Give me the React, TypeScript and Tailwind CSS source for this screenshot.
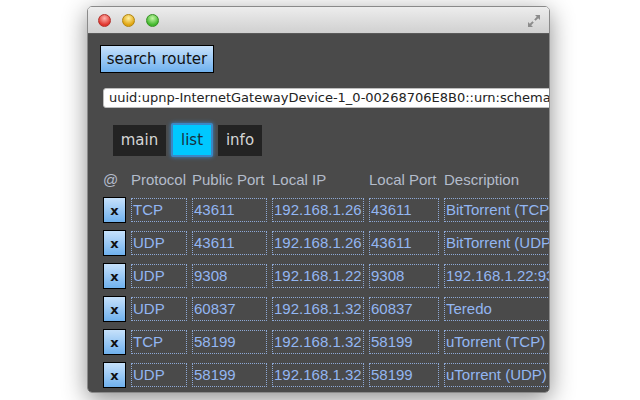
import React from 'react';

type Mapping = {
  protocol: string;
  publicPort: string;
  localIp: string;
  localPort: string;
  description: string;
};

const MAPPINGS: Mapping[] = [
  { protocol: 'TCP', publicPort: '43611', localIp: '192.168.1.26', localPort: '43611', description: 'BitTorrent (TCP)' },
  { protocol: 'UDP', publicPort: '43611', localIp: '192.168.1.26', localPort: '43611', description: 'BitTorrent (UDP)' },
  { protocol: 'UDP', publicPort: '9308', localIp: '192.168.1.22', localPort: '9308', description: '192.168.1.22:9308' },
  { protocol: 'UDP', publicPort: '60837', localIp: '192.168.1.32', localPort: '60837', description: 'Teredo' },
  { protocol: 'TCP', publicPort: '58199', localIp: '192.168.1.32', localPort: '58199', description: 'uTorrent (TCP)' },
  { protocol: 'UDP', publicPort: '58199', localIp: '192.168.1.32', localPort: '58199', description: 'uTorrent (UDP)' },
];

const lucida = "font-['DejaVu_Sans',sans-serif]";
const helv = "font-['Liberation_Sans',Arial,sans-serif]";

const Cell = ({ children }: { children: React.ReactNode }) => (
  <div className="h-[24px] border border-dotted border-[#8ea9d6] px-[1px] text-[15px] leading-[22px] text-[#93b6f2] whitespace-nowrap overflow-hidden">
    {children}
  </div>
);

const TrafficLight = ({ from, to, edge }: { from: string; to: string; edge: string }) => (
  <div
    className="w-[13px] h-[13px] rounded-full border"
    style={{ background: `radial-gradient(circle at 50% 30%, ${from}, ${to} 70%)`, borderColor: edge }}
  />
);

export default function App() {
  return (
    <div className="w-[640px] h-[400px] bg-white overflow-hidden pl-[87px] pt-[6px]">
      <div className="w-[463px] h-[387px] rounded-[5px] overflow-hidden flex flex-col shadow-[0_6px_24px_rgba(0,0,0,0.45)] border border-[#8a8a8a]">
        {/* title bar */}
        <div className="h-[27px] shrink-0 flex items-center pl-[10px] pr-[9px] bg-gradient-to-b from-[#ededed] to-[#d0d0d0] border-b border-[#5a5a5a]">
          <div className="flex gap-[11px] mt-[1px]">
            <TrafficLight from="#ffb3ad" to="#e0342c" edge="#b2302a" />
            <TrafficLight from="#fff1a0" to="#e0a410" edge="#b1850e" />
            <TrafficLight from="#c4f7a6" to="#41b72d" edge="#368f24" />
          </div>
          <div className="flex-1" />
          <svg width="16" height="16" viewBox="0 0 16 16" className="mt-[1px] mr-[-2px]">
            <path d="M9 2h5v5l-1.8-1.8-2.6 2.6-1.4-1.4 2.6-2.6z" fill="#8c8c8c" />
            <path d="M7 14H2V9l1.8 1.8 2.6-2.6 1.4 1.4-2.6 2.6z" fill="#8c8c8c" />
          </svg>
        </div>

        {/* body */}
        <div className="flex-1 bg-[#4a4a4a] pl-[12px] pt-[11px] overflow-hidden">
          <button
            className={`${lucida} w-[114px] h-[28px] border border-black bg-gradient-to-b from-[#c6e1fb] to-[#6fb1ee] text-[15px] text-[#111] leading-none`}
          >
            search router
          </button>

          <div
            className={`${lucida} ml-[3px] mt-[15px] w-[470px] h-[20px] rounded-[3px] bg-white border border-[#bdbdbd] pl-[5px] text-[13px] leading-[18px] text-[#222] whitespace-nowrap overflow-hidden`}
          >
            uuid:upnp-InternetGatewayDevice-1_0-00268706E8B0::urn:schemas-upnp-org:device
          </div>

          <div className={`${lucida} flex items-center gap-[5px] ml-[13px] mt-[15px]`}>
            <div className="w-[53px] h-[31px] bg-[#232323] text-[#d6d6d6] text-[15px] flex items-center justify-center">
              main
            </div>
            <div className="w-[42px] h-[34px] border-[2px] border-[#3b87c6] rounded-[2px] shadow-[0_0_4px_#3b87c6] bg-[#00c8ff] text-[#16303d] text-[15px] flex items-center justify-center">
              list
            </div>
            <div className="w-[44px] h-[31px] bg-[#232323] text-[#d6d6d6] text-[15px] flex items-center justify-center">
              info
            </div>
          </div>

          <div
            className={`${helv} mt-[13px] ml-[3px] grid grid-cols-[23px_56px_75px_92px_70px_120px] gap-x-[5px] gap-y-[7px] items-center`}
          >
            <div className="text-[15px] text-[#b4bccb] leading-[20px]">@</div>
            <div className="text-[15px] text-[#b4bccb] leading-[20px] whitespace-nowrap">Protocol</div>
            <div className="text-[15px] text-[#b4bccb] leading-[20px] whitespace-nowrap">Public Port</div>
            <div className="text-[15px] text-[#b4bccb] leading-[20px] whitespace-nowrap">Local IP</div>
            <div className="text-[15px] text-[#b4bccb] leading-[20px] whitespace-nowrap">Local Port</div>
            <div className="text-[15px] text-[#b4bccb] leading-[20px] whitespace-nowrap">Description</div>

            {MAPPINGS.map((m, i) => (
              <React.Fragment key={i}>
                <button
                  className={`${lucida} w-[23px] h-[26px] border border-black bg-gradient-to-b from-[#c6e1fb] to-[#6fb1ee] text-[13px] font-bold text-[#111] leading-none`}
                >
                  x
                </button>
                <Cell>{m.protocol}</Cell>
                <Cell>{m.publicPort}</Cell>
                <Cell>{m.localIp}</Cell>
                <Cell>{m.localPort}</Cell>
                <Cell>{m.description}</Cell>
              </React.Fragment>
            ))}
          </div>
        </div>
      </div>
    </div>
  );
}
